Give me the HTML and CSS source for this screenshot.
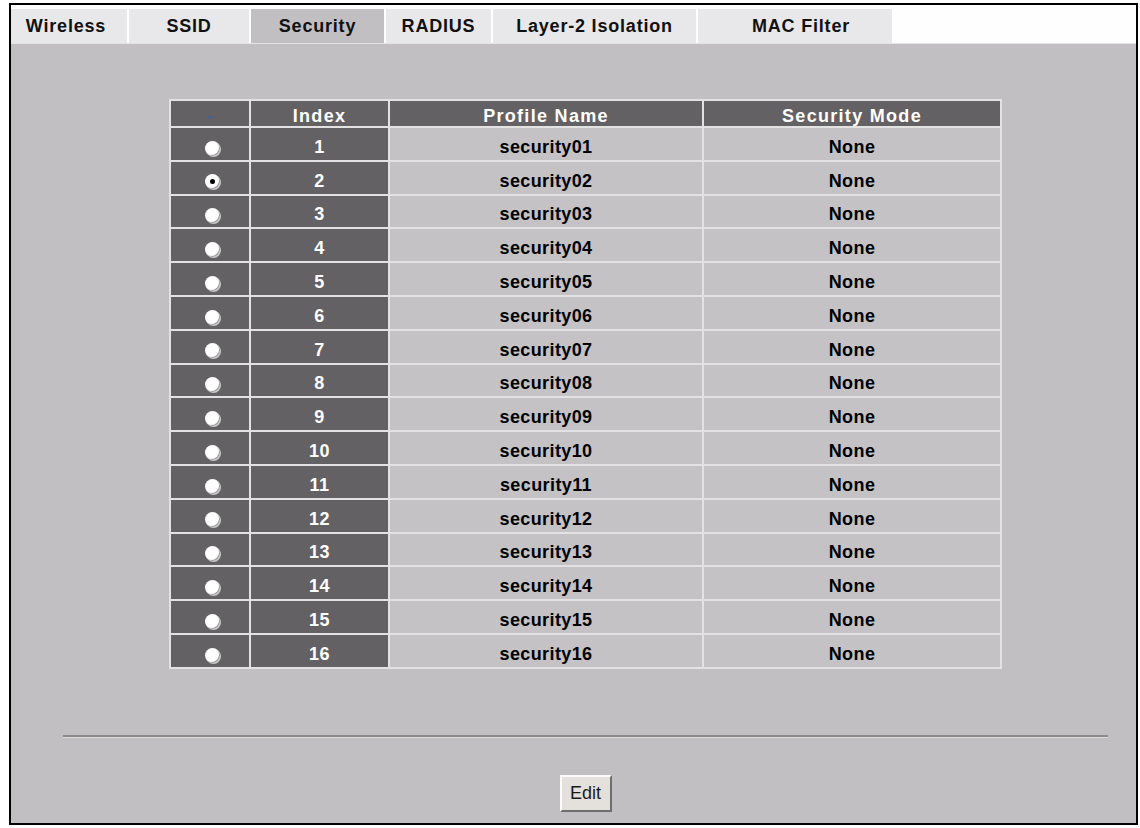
FILE: index.html
```html
<!DOCTYPE html>
<html lang="en">
<head>
    <meta charset="UTF-8">
    <title>Wireless - Security</title>
    <link rel="stylesheet" href="styles.css">
</head>
<body>
    <div class="frame">
        <!-- Tab bar -->
        <div class="tabs">
            <a href="#" class="tab tab-wireless">Wireless</a>
            <a href="#" class="tab tab-ssid">SSID</a>
            <a href="#" class="tab tab-security active">Security</a>
            <a href="#" class="tab tab-radius">RADIUS</a>
            <a href="#" class="tab tab-layer2">Layer-2 Isolation</a>
            <a href="#" class="tab tab-mac">MAC Filter</a>
        </div>

        <div class="content">
            <table class="profile-table">
                <thead>
                    <tr>
                        <th class="col-select"><span class="dash"></span></th>
                        <th class="col-index">Index</th>
                        <th class="col-name">Profile Name</th>
                        <th class="col-mode">Security Mode</th>
                    </tr>
                </thead>
                <tbody id="profileBody">
                    <tr><td class="dark"><span class="radio"></span></td><td class="dark">1</td><td>security01</td><td>None</td></tr>
                    <tr><td class="dark"><span class="radio checked"></span></td><td class="dark">2</td><td>security02</td><td>None</td></tr>
                    <tr><td class="dark"><span class="radio"></span></td><td class="dark">3</td><td>security03</td><td>None</td></tr>
                    <tr><td class="dark"><span class="radio"></span></td><td class="dark">4</td><td>security04</td><td>None</td></tr>
                    <tr><td class="dark"><span class="radio"></span></td><td class="dark">5</td><td>security05</td><td>None</td></tr>
                    <tr><td class="dark"><span class="radio"></span></td><td class="dark">6</td><td>security06</td><td>None</td></tr>
                    <tr><td class="dark"><span class="radio"></span></td><td class="dark">7</td><td>security07</td><td>None</td></tr>
                    <tr><td class="dark"><span class="radio"></span></td><td class="dark">8</td><td>security08</td><td>None</td></tr>
                    <tr><td class="dark"><span class="radio"></span></td><td class="dark">9</td><td>security09</td><td>None</td></tr>
                    <tr><td class="dark"><span class="radio"></span></td><td class="dark">10</td><td>security10</td><td>None</td></tr>
                    <tr><td class="dark"><span class="radio"></span></td><td class="dark">11</td><td>security11</td><td>None</td></tr>
                    <tr><td class="dark"><span class="radio"></span></td><td class="dark">12</td><td>security12</td><td>None</td></tr>
                    <tr><td class="dark"><span class="radio"></span></td><td class="dark">13</td><td>security13</td><td>None</td></tr>
                    <tr><td class="dark"><span class="radio"></span></td><td class="dark">14</td><td>security14</td><td>None</td></tr>
                    <tr><td class="dark"><span class="radio"></span></td><td class="dark">15</td><td>security15</td><td>None</td></tr>
                    <tr><td class="dark"><span class="radio"></span></td><td class="dark">16</td><td>security16</td><td>None</td></tr>
                </tbody>
            </table>

            <hr class="divider">

            <div class="actions">
                <button class="btn">Edit</button>
            </div>
        </div>
    </div>
</body>
</html>
```

FILE: styles.css
```css
:root {
    --panel-bg: #c1bfc1;
    --tab-bg: #e8e7e9;
    --dark-cell: #646165;
    --light-cell: #c4c2c4;
    --grid-line: #e2e2e2;
}

* {
    margin: 0;
    padding: 0;
    box-sizing: border-box;
}

body {
    font-family: 'Liberation Sans', Arial, sans-serif;
    background: #ffffff;
    color: #111;
}

.frame {
    margin: 3px 0 0 9px;
    width: 1129px;
    height: 822px;
    border: 2px solid #000;
    background: var(--panel-bg);
    display: flex;
    flex-direction: column;
}

/* Tabs */
.tabs {
    display: flex;
    gap: 2px;
    padding-top: 4px;
    background: #fefefe;
    border-bottom: 1px solid #e4e4e4;
}

.tab {
    height: 34px;
    display: flex;
    align-items: center;
    justify-content: center;
    background: var(--tab-bg);
    color: #111;
    text-decoration: none;
    font-weight: bold;
    font-size: 18px;
    letter-spacing: 0.8px;
}

.tab.active {
    background: var(--panel-bg);
}

.tab-wireless { width: 116px; padding-right: 6px; }
.tab-ssid { width: 120px; }
.tab-security { width: 133px; }
.tab-radius { width: 105px; }
.tab-layer2 { width: 203px; }
.tab-mac { width: 194px; padding-left: 12px; }

/* Content */
.content {
    flex: 1;
    padding: 55px 28px 0 52px;
}

.profile-table {
    margin: 0 auto;
    border-collapse: separate;
    border-spacing: 2px;
    background: var(--grid-line);
    font-size: 18px;
    line-height: 18px;
    font-weight: bold;
    letter-spacing: 0.4px;
    text-align: center;
}

.profile-table th {
    height: 25px;
    padding: 5px 0 0;
    background: var(--dark-cell);
    color: #fff;
    letter-spacing: 1.3px;
}

.profile-table td {
    height: 31.8px;
    padding: 6px 0 0;
    background: var(--light-cell);
    color: #000;
}

.profile-table td.dark {
    background: var(--dark-cell);
    color: #fff;
}

.col-select { width: 78px; }
.col-index { width: 137px; }
.col-name { width: 312px; }
.col-mode { width: 296px; }

.dash {
    display: inline-block;
    width: 6px;
    height: 2px;
    margin-left: 2px;
    background: #4c5d94;
    vertical-align: middle;
}

.radio {
    display: inline-block;
    width: 15px;
    height: 15px;
    margin-left: 5px;
    border-radius: 50%;
    background: #fff;
    box-shadow: 1px 1px 0 #c8c8c8, -1px -1px 0 #a0a0a0 inset;
    vertical-align: middle;
    position: relative;
}

.radio.checked::after {
    content: '';
    position: absolute;
    left: 5px;
    top: 5px;
    width: 5px;
    height: 5px;
    border-radius: 50%;
    background: #000;
}

.divider {
    margin-top: 66px;
    border: none;
    border-top: 2px solid #8b8b89;
    border-bottom: 1px solid #dcdcdc;
}

.actions {
    margin-top: 37px;
    text-align: center;
}

.btn {
    width: 52px;
    height: 37px;
    background: #e4e1dc;
    border: 2px solid;
    border-color: #fafafa #6e6e6e #6e6e6e #fafafa;
    font-family: 'Liberation Sans', Arial, sans-serif;
    font-size: 18px;
    color: #1a1a1a;
    cursor: pointer;
}
```
